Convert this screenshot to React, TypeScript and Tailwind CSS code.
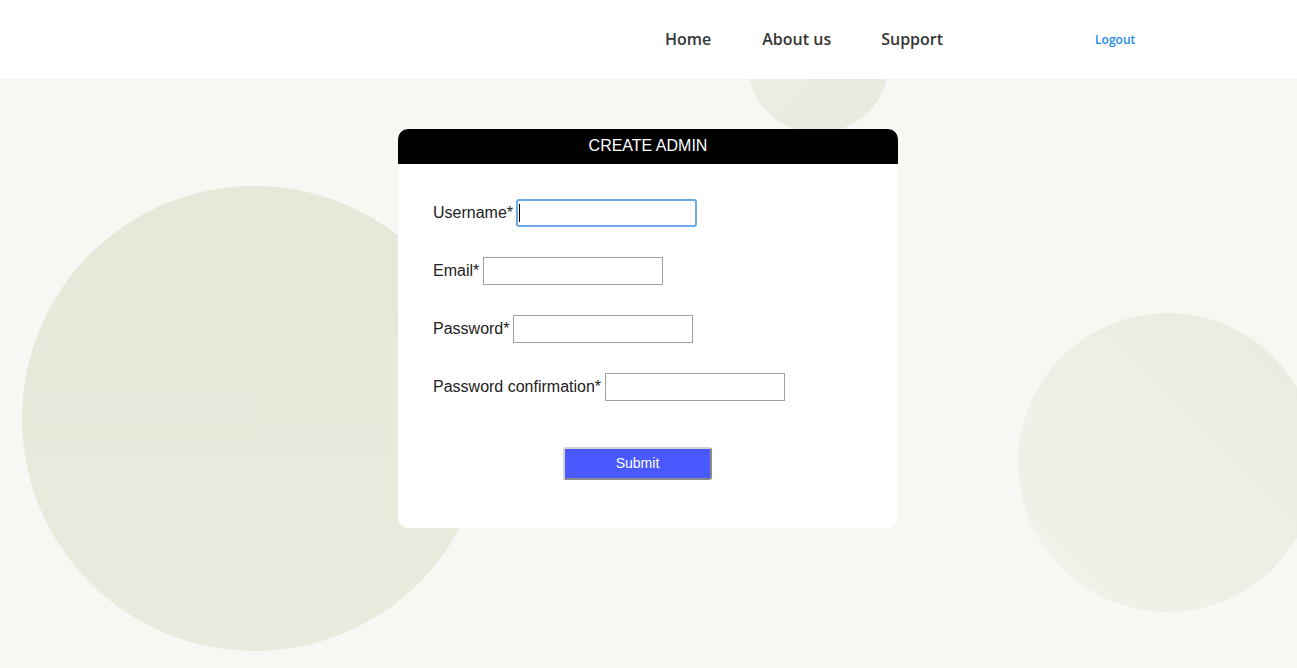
const fields = [
    { label: "Username*", focused: true },
    { label: "Email*", focused: false },
    { label: "Password*", focused: false },
    { label: "Password confirmation*", focused: false },
];

export default function App() {
    return (
        <div className="min-h-screen w-full bg-[#f7f7f3] font-['Liberation_Sans',Arial,sans-serif]">
            {/* HEADER */}
            <header className="relative z-10 flex h-[79px] items-center bg-white pb-[2px] pl-[665px] font-['Open_Sans',sans-serif]">
                <a className="text-[16px] font-semibold text-[#363636]" href="#">Home</a>
                <a className="ml-[51px] text-[16px] font-semibold text-[#363636]" href="#">About us</a>
                <a className="ml-[50px] text-[16px] font-semibold text-[#363636]" href="#">Support</a>
                <a className="ml-[152px] pt-[2px] text-[12px] font-semibold text-[#1e88e5]" href="#">Logout</a>
            </header>

            {/* MAIN */}
            <main className="relative h-[589px] overflow-hidden">
                {/* decorative circles */}
                <div className="absolute left-[22px] top-[107px] h-[465px] w-[465px] rounded-full bg-gradient-to-b from-[#e7e7da] to-[#eaeade]" />
                <div className="absolute left-[747px] top-[-88px] h-[142px] w-[142px] rounded-full bg-gradient-to-br from-[#eeeee5] to-[#e9e9de]" />
                <div className="absolute left-[1018px] top-[234px] h-[299px] w-[299px] rounded-full bg-gradient-to-bl from-[#eaeadf] to-[#f2f2eb]" />

                {/* CARD */}
                <div className="relative ml-[398px] mt-[50px] w-[500px] overflow-hidden rounded-[10px] bg-white">
                    <div className="h-[35px] bg-black text-center text-[16px] leading-[33px] text-white">
                        CREATE ADMIN
                    </div>
                    <form className="flex flex-col gap-[30px] px-[35px] pt-[35px]">
                        {fields.map((f) => (
                            <div key={f.label} className="flex h-[28px] items-center gap-[4px] text-[16px] text-[#222]">
                                <label>{f.label}</label>
                                <div className="relative">
                                    <input
                                        className={
                                            f.focused
                                                ? "-ml-px h-[28px] w-[181px] rounded-[3px] border-2 border-[#6ea8e8] bg-white outline-none"
                                                : "h-[28px] w-[180px] border border-[#a0a0a0] bg-white outline-none"
                                        }
                                        type={f.label.startsWith("Password") ? "password" : "text"}
                                    />
                                    {f.focused && <span className="absolute left-[2px] top-[5px] h-[18px] w-px bg-black" />}
                                </div>
                            </div>
                        ))}
                        <div className="flex pb-[48px] pl-[130px] pt-[16px]">
                            <button
                                type="button"
                                className="h-[33px] w-[149px] rounded-[3px] border-2 border-b-[#8c8c8c] border-l-[#d4d4d4] border-r-[#8c8c8c] border-t-[#d4d4d4] bg-[#4859ff] text-[14px] text-white"
                            >
                                Submit
                            </button>
                        </div>
                    </form>
                </div>
            </main>
        </div>
    );
}
